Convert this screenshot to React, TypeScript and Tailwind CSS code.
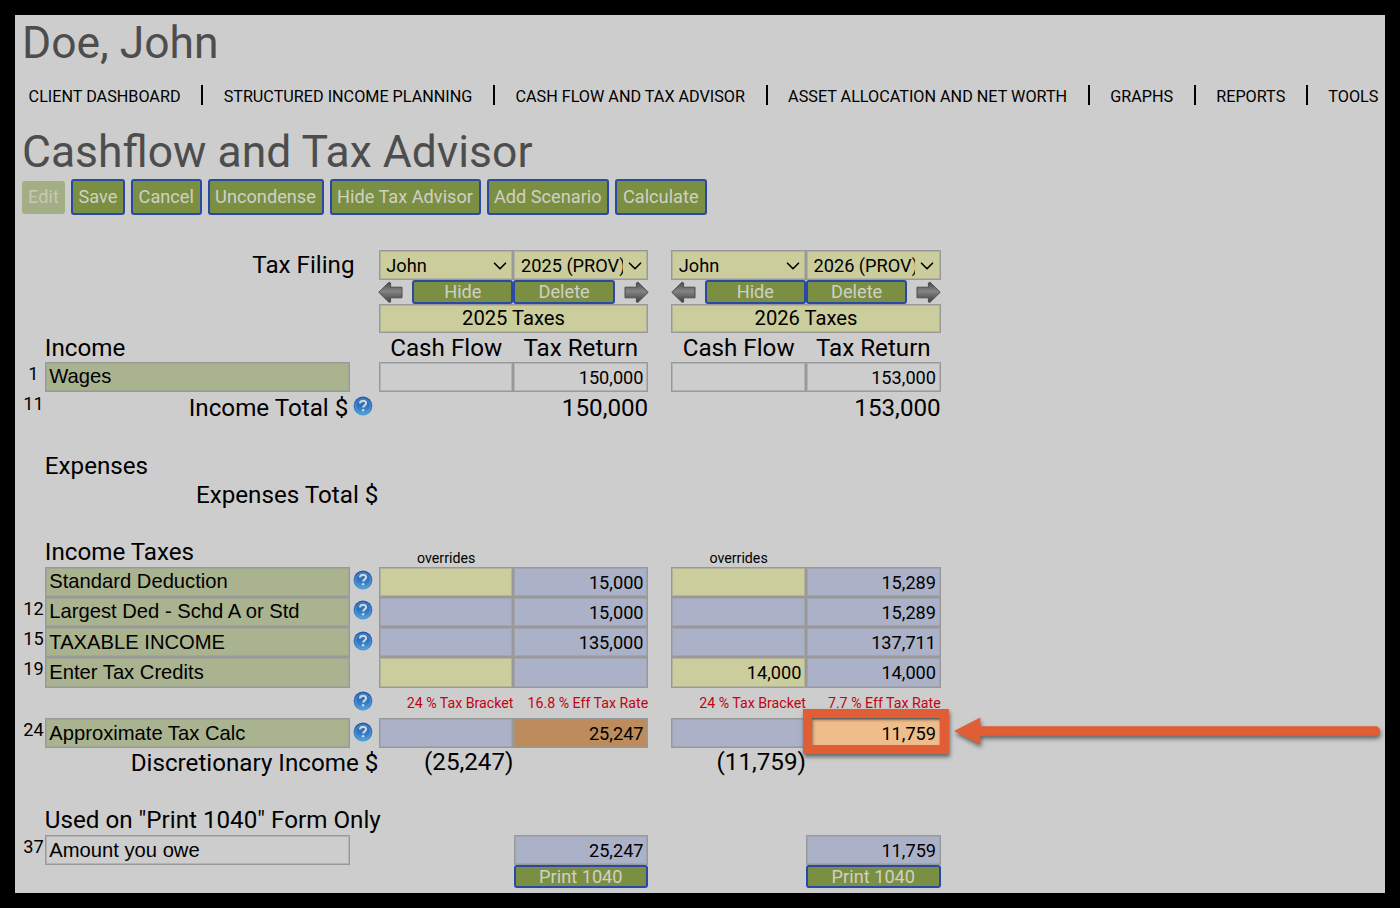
import React from 'react';
import { ChevronDown } from 'lucide-react';
import clsx from 'clsx';

const NAV_ITEMS = [
  'CLIENT DASHBOARD',
  'STRUCTURED INCOME PLANNING',
  'CASH FLOW AND TAX ADVISOR',
  'ASSET ALLOCATION AND NET WORTH',
  'GRAPHS',
  'REPORTS',
  'TOOLS',
];

const ACTIONS = [
  { label: 'Save', width: 'w-[54px]' },
  { label: 'Cancel', width: 'w-[70.5px]' },
  { label: 'Uncondense', width: 'w-[116px]' },
  { label: 'Hide Tax Advisor', width: 'w-[151px]' },
  { label: 'Add Scenario', width: 'w-[122.5px]' },
  { label: 'Calculate', width: 'w-[91.5px]' },
];

const TONES = {
  plain: '',
  yellow: 'bg-[#cccd9c]',
  blue: 'bg-[#abb1c7]',
  brown: 'bg-[#bd8c5d]',
  orange: 'bg-[#efbc8b]',
};

const OUTLINE = 'border border-[#999] shadow-[inset_0_0_0_1px_rgba(153,153,153,0.5)]';

type Tone = keyof typeof TONES;

interface CellData {
  value?: string;
  tone: Tone;
  marked?: boolean;
}

const blank = (tone: Tone): CellData => ({ tone });
const cell = (tone: Tone, value: string): CellData => ({ tone, value });

interface TaxRow {
  line?: string;
  label: string;
  help: boolean;
  cells: CellData[];
}

const TAX_ROWS: TaxRow[] = [
  {
    label: 'Standard Deduction',
    help: true,
    cells: [blank('yellow'), cell('blue', '15,000'), blank('yellow'), cell('blue', '15,289')],
  },
  {
    line: '12',
    label: 'Largest Ded - Schd A or Std',
    help: true,
    cells: [blank('blue'), cell('blue', '15,000'), blank('blue'), cell('blue', '15,289')],
  },
  {
    line: '15',
    label: 'TAXABLE INCOME',
    help: true,
    cells: [blank('blue'), cell('blue', '135,000'), blank('blue'), cell('blue', '137,711')],
  },
  {
    line: '19',
    label: 'Enter Tax Credits',
    help: false,
    cells: [blank('yellow'), blank('blue'), cell('yellow', '14,000'), cell('blue', '14,000')],
  },
];

const HelpIcon: React.FC = () => (
  <svg viewBox="0 0 20 20" className="h-5 w-5" aria-label="Help">
    <defs>
      <linearGradient id="helpFill" x1="0" y1="0" x2="0" y2="1">
        <stop offset="0" stopColor="#2258a4" />
        <stop offset="0.5" stopColor="#2f74bf" />
        <stop offset="1" stopColor="#4ba0dc" />
      </linearGradient>
    </defs>
    <circle cx="10" cy="10" r="9.4" fill="url(#helpFill)" />
    <circle cx="10" cy="10" r="7.3" fill="none" stroke="#6da3d6" strokeOpacity="0.7" strokeWidth="1" />
    <path
      d="M7 7.6C7 5.8 8.2 4.8 10 4.8s3.1 1 3.1 2.5c0 2.1-2.9 2.2-2.9 4.3"
      fill="none"
      stroke="#c9d6e4"
      strokeWidth="2.2"
    />
    <circle cx="10.1" cy="14.3" r="1.3" fill="#c9d6e4" />
  </svg>
);

const MoveArrow: React.FC<{ flip?: boolean }> = ({ flip }) => (
  <svg viewBox="0 0 25 22" className={clsx('h-[22px] w-[25px] shrink-0', flip ? '-mr-[0.5px] -scale-x-100' : '-ml-[0.5px]')}>
    <defs>
      <linearGradient id="arrowFill" x1="0" y1="0" x2="0" y2="1">
        <stop offset="0" stopColor="#484848" />
        <stop offset="0.45" stopColor="#858585" />
        <stop offset="1" stopColor="#3e3e3e" />
      </linearGradient>
    </defs>
    <path
      d="M0.8 11.3 11 1.2 12.6 2V6.2H24V16.8H12.6V21L11 21.3Z"
      fill="url(#arrowFill)"
      stroke="#4d4d4d"
      strokeWidth="1"
      strokeLinejoin="round"
    />
  </svg>
);

const Field: React.FC<{ data: CellData }> = ({ data }) => (
  <div
    className={clsx(
      'relative flex h-full w-[134.7px] items-center justify-end pr-[3.6px] pt-px text-[18.2px]',
      OUTLINE,
      TONES[data.tone]
    )}
  >
    {data.value}
    {data.marked && (
      <div className="absolute -left-[3.5px] -top-[10px] h-[44.5px] w-[146px] border-[9px] border-[#e05d36] shadow-[1px_3px_4px_rgba(0,0,0,0.5),inset_1px_2px_3px_rgba(0,0,0,0.4)]" />
    )}
  </div>
);

/* One table line: number, label, help icon, then the two scenarios */
interface LineProps {
  line?: string;
  label?: React.ReactNode;
  help?: boolean;
  height?: string;
  left?: React.ReactNode;
  right?: React.ReactNode;
}

const Line: React.FC<LineProps> = ({ line, label, help, height = 'h-[30.3px]', left, right }) => (
  <div className={clsx('flex', height)}>
    <div className="w-[22.8px] text-center text-[18.2px] leading-[23px]">{line}</div>
    <div className="w-[305px]">{label}</div>
    <div className="flex w-[29px] justify-center pr-[2px] pt-[3.5px]">{help && <HelpIcon />}</div>
    <div className="flex w-[269.4px]">{left}</div>
    <div className="ml-[23.1px] flex w-[269.4px]">{right}</div>
  </div>
);

const LabelBox: React.FC<{ text: string; plain?: boolean }> = ({ text, plain }) => (
  <div
    className={clsx(
      "flex h-full items-center pb-px pl-[3.5px] font-['Liberation_Sans',Arial,sans-serif] text-[20.2px]",
      OUTLINE,
      !plain && 'bg-[#aab38f]'
    )}
  >
    {text}
  </div>
);

const Heading: React.FC<{ text: string }> = ({ text }) => (
  <div className="whitespace-nowrap text-[24.2px] leading-[30px]">{text}</div>
);

const Select: React.FC<{ value: string }> = ({ value }) => (
  <div
    className={clsx(
      'flex h-full w-[134.7px] items-center bg-[#cccd9c] pl-[6.5px] pt-px text-[18.2px]',
      OUTLINE
    )}
  >
    <span className="w-[102px] shrink-0 overflow-hidden whitespace-nowrap">{value}</span>
    <ChevronDown className="ml-px h-[22px] w-[22px] shrink-0" strokeWidth={1.8} />
  </div>
);

const GreenButton: React.FC<{ text: string; width: string }> = ({ text, width }) => (
  <button
    className={clsx(
      'h-full rounded-[3px] border-2 border-[#2a48a5] bg-[#7a8f41] text-[18.2px] leading-[19px] text-[#d0d0c8]',
      width
    )}
  >
    {text}
  </button>
);

const MoveButtons: React.FC = () => (
  <div className="flex w-full items-center justify-between">
    <MoveArrow />
    <div className="flex h-full">
      <GreenButton text="Hide" width="w-[101.3px]" />
      <GreenButton text="Delete" width="w-[101.3px]" />
    </div>
    <MoveArrow flip />
  </div>
);

const YearTitle: React.FC<{ year: string }> = ({ year }) => (
  <div className={clsx('w-full bg-[#cccd9c] text-center text-[20.2px] leading-[27px]', OUTLINE)}>
    {year} Taxes
  </div>
);

const ColumnTitles: React.FC = () => (
  <div className="grid w-full grid-cols-2 text-center text-[24.2px] leading-[30px]">
    <div>Cash Flow</div>
    <div>Tax Return</div>
  </div>
);

const Total: React.FC<{ value: string; first?: boolean }> = ({ value, first }) => (
  <div className={clsx('text-right text-[24.2px]', first ? 'w-[134.7px] leading-[29px]' : 'w-full leading-[32px]')}>
    {value}
  </div>
);

const Rates: React.FC<{ bracket: string; rate: string }> = ({ bracket, rate }) => (
  <div className="grid w-full grid-cols-2 whitespace-nowrap text-right text-[14.2px] leading-[30px] text-[#c00514]">
    <div>{bracket} % Tax Bracket</div>
    <div>{rate} % Eff Tax Rate</div>
  </div>
);

const Overrides: React.FC = () => (
  <div className="w-[134.7px] pt-[10px] text-center text-[14.2px] leading-[22px]">overrides</div>
);

const PrintColumn: React.FC<{ value: string }> = ({ value }) => (
  <div className="ml-auto h-full">
    <Field data={cell('blue', value)} />
  </div>
);

const PointerArrow: React.FC = () => (
  <svg
    viewBox="0 0 430 34"
    className="absolute left-[952px] top-[715px] h-[34px] w-[430px] overflow-visible drop-shadow-[1px_3px_2px_rgba(0,0,0,0.5)]"
  >
    <path d="M2 16 28.3 2.5V29.5Z" fill="#e05d36" />
    <path d="M27 16H423.5" stroke="#e05d36" strokeWidth="9.3" strokeLinecap="round" />
  </svg>
);

const App: React.FC = () => {
  return (
    <div className="relative h-[908px] w-[1400px] overflow-hidden border-[15px] border-black bg-[#cdcdcd] pl-[7px] font-[Roboto,sans-serif] text-black">
      <h1 className="h-[55px] text-[44.4px] leading-[57px] text-[#4d4d4d]">Doe, John</h1>

      <nav className="flex h-[52px] items-center whitespace-nowrap pl-[6.6px] pt-[1.5px] text-[16.2px]">
        {NAV_ITEMS.map((item, i) => (
          <React.Fragment key={item}>
            {i > 0 && <span className="ml-[20.8px] mr-[20.3px] -mt-[4px] h-5 w-[2px] shrink-0 bg-black" />}
            <span>{item}</span>
          </React.Fragment>
        ))}
      </nav>

      <h1 className="h-[57px] text-[44.45px] leading-[61px] text-[#4d4d4d]">Cashflow and Tax Advisor</h1>

      <div className="flex h-[36px] items-center gap-[6px]">
        <button className="h-[33px] w-[43px] rounded-[3px] bg-[#a3ae84] text-[18.2px] text-[#c5c9b8]">
          Edit
        </button>
        {ACTIONS.map((action) => (
          <div key={action.label} className="h-full [&>button]:pb-[2px]">
            <GreenButton text={action.label} width={action.width} />
          </div>
        ))}
      </div>

      {/* Scenario headers */}
      <div className="mt-[35px]">
        <Line
          height="h-[30px]"
          label={<div className="pl-[207.5px]"><Heading text="Tax Filing" /></div>}
          left={<><Select value="John" /><Select value="2025 (PROV)" /></>}
          right={<><Select value="John" /><Select value="2026 (PROV)" /></>}
        />
        <Line height="h-[23.5px]" left={<MoveButtons />} right={<MoveButtons />} />
        <Line height="h-[29.5px]" left={<YearTitle year="2025" />} right={<YearTitle year="2026" />} />
        <Line
          height="h-[29px]"
          label={<Heading text="Income" />}
          left={<ColumnTitles />}
          right={<ColumnTitles />}
        />
      </div>

      {/* Income and expenses */}
      <Line
        line="1"
        height="h-[30px]"
        label={<LabelBox text="Wages" />}
        left={<><Field data={blank('plain')} /><Field data={cell('plain', '150,000')} /></>}
        right={<><Field data={blank('plain')} /><Field data={cell('plain', '153,000')} /></>}
      />
      <Line
        line="11"
        height="h-[59px]"
        help
        label={<div className="pr-[1.5px] pt-px text-right"><Heading text="Income Total $" /></div>}
        left={<Total value="150,000" />}
        right={<Total value="153,000" />}
      />
      <Line height="h-[29px]" label={<Heading text="Expenses" />} />
      <Line
        height="h-[57px]"
        label={<div className="-mr-[28.6px] text-right"><Heading text="Expenses Total $" /></div>}
      />

      {/* Income taxes */}
      <Line height="h-[29.6px]" label={<Heading text="Income Taxes" />} left={<Overrides />} right={<Overrides />} />
      {TAX_ROWS.map((row) => (
        <Line
          key={row.label}
          line={row.line}
          help={row.help}
          label={<LabelBox text={row.label} />}
          left={<><Field data={row.cells[0]} /><Field data={row.cells[1]} /></>}
          right={<><Field data={row.cells[2]} /><Field data={row.cells[3]} /></>}
        />
      ))}
      <Line
        help
        left={<Rates bracket="24" rate="16.8" />}
        right={<Rates bracket="24" rate="7.7" />}
      />
      <Line
        line="24"
        help
        label={<LabelBox text="Approximate Tax Calc" />}
        left={<><Field data={blank('blue')} /><Field data={cell('brown', '25,247')} /></>}
        right={<><Field data={blank('blue')} /><Field data={{ tone: 'orange', value: '11,759', marked: true }} /></>}
      />
      <Line
        height="h-[56.6px]"
        label={<div className="-mr-[28.6px] -mt-[0.5px] text-right"><Heading text="Discretionary Income $" /></div>}
        left={<Total first value="(25,247)" />}
        right={<Total first value="(11,759)" />}
      />

      {/* 1040 form */}
      <Line height="h-[30.3px]" label={<Heading text={'Used on "Print 1040" Form Only'} />} />
      <Line
        line="37"
        height="h-[30px]"
        label={<LabelBox text="Amount you owe" plain />}
        left={<PrintColumn value="25,247" />}
        right={<PrintColumn value="11,759" />}
      />
      <Line
        height="h-[23px]"
        left={<div className="ml-auto"><GreenButton text="Print 1040" width="w-[134.7px]" /></div>}
        right={<div className="ml-auto"><GreenButton text="Print 1040" width="w-[134.7px]" /></div>}
      />

      <div className="absolute -left-[15px] -top-[15px]">
        <PointerArrow />
      </div>
    </div>
  );
};

export default App;
